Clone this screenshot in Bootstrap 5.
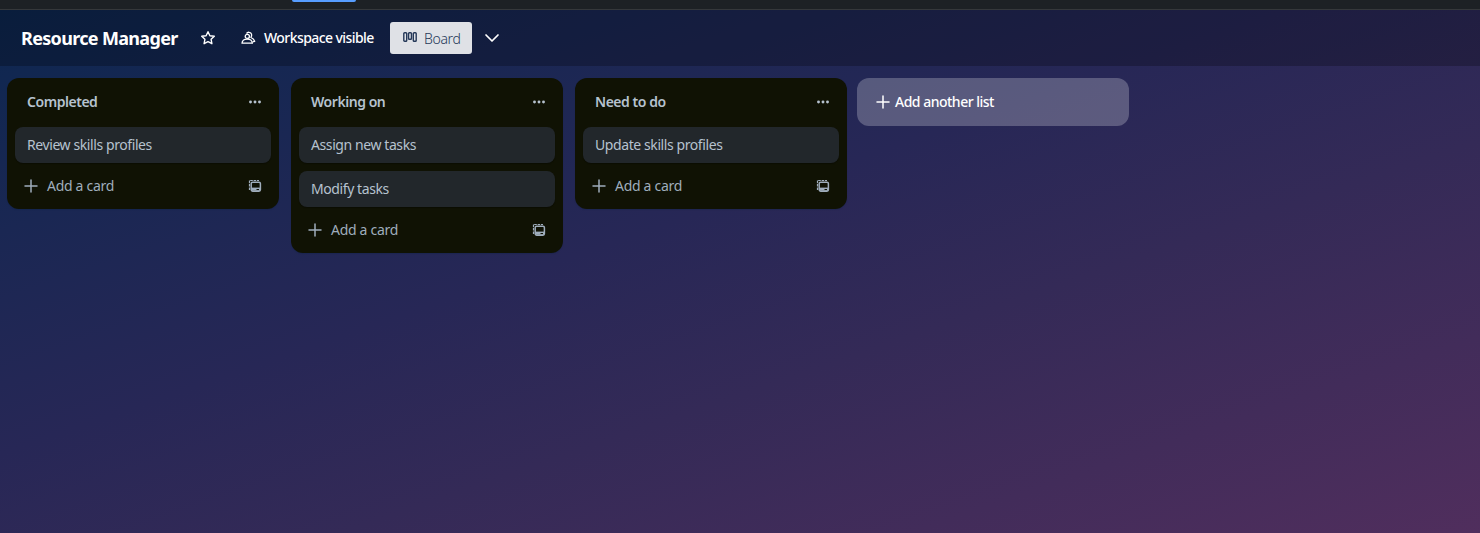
<!DOCTYPE html>
<html lang="en">
<head>
<meta charset="utf-8">
<meta name="viewport" content="width=device-width, initial-scale=1">
<title>Resource Manager</title>
<link rel="stylesheet" href="https://cdn.jsdelivr.net/npm/bootstrap@5.3.0/dist/css/bootstrap.min.css">
<style>
body{font-family:"Noto Sans","Open Sans",sans-serif;font-size:14px;line-height:20px;color:#b6c2cf;height:533px;background:#1d2125}
svg{display:block;flex:none}
.topnav{height:10px;background:#1d2125;border-bottom:1px solid #35383b}
.tab-mark{width:64px;height:2px;margin-left:292px;background:#579dff;border-radius:0 0 2px 2px}
.board{height:523px;background:linear-gradient(161deg,#0d2750 0%,#272756 43%,#342a57 62%,#502e5d 100%)}
.board-head{height:56px;background:rgba(0,0,0,.24);color:#fff;padding-left:21px}
.board-title{font-size:18px;line-height:24px;width:157px;letter-spacing:-.67px}
.star{margin-left:22px}
.people{margin-left:25px}
.visible-label{margin-left:8px;width:110px;letter-spacing:-.57px}
.board-btn{width:82px;height:32px;margin-left:16px;padding:0 0 0 13px;background:#dfe1e6;color:#253858;border-radius:3px}
.board-btn span{margin-left:7px;font-weight:300;letter-spacing:-.35px}
.chev{margin-left:12px}
.lists{padding:12px 0 0 7px}
.list-col{width:272px;margin-right:12px;background:#101204;border-radius:12px;padding:8px 8px 8.5px;box-shadow:0 1px 1px #091e4240}
.list-head{height:32px;padding:0 9px 0 12px;margin-bottom:9px}
.list-title{font-size:14px;font-weight:600;letter-spacing:-.46px;margin:0;line-height:20px}
.task{height:36px;background:#22272b;border-radius:8px;padding:8px 12px;margin-bottom:8px;box-shadow:0 1px 1px rgba(0,0,0,.3);letter-spacing:-.41px}
.list-foot{height:29px;padding:1px 9px 0;color:#9fadbc;letter-spacing:-.3px}
.list-foot span{margin-left:9px}
.add-list{width:272px;height:48px;margin-left:-2px;padding-left:19px;border-radius:12px;background:rgba(255,255,255,.24);color:#fff;letter-spacing:-.5px}
.add-list span{margin-left:5px}
</style>
<script src="https://cdn.jsdelivr.net/npm/bootstrap@5.3.0/dist/js/bootstrap.bundle.min.js"></script>
</head>
<body class="overflow-hidden">
<svg class="d-none" aria-hidden="true">
  <symbol id="plus" viewBox="0 0 14 14"><path d="M7 1v12M1 7h12" stroke="currentColor" stroke-width="1.5" stroke-linecap="round"/></symbol>
  <symbol id="dots" viewBox="0 0 14 4"><g fill="currentColor"><circle cx="2.5" cy="2" r="1.45"/><circle cx="7" cy="2" r="1.45"/><circle cx="11.5" cy="2" r="1.45"/></g></symbol>
  <symbol id="template" viewBox="0 0 14 14"><g fill="none" stroke="currentColor"><path d="M1.5 11V1.5h9.5" stroke-width="1.2" stroke-dasharray="2.6 .8"/><rect x="3.2" y="3.2" width="9.2" height="9" rx="1.4" stroke-width="1.5"/></g><path d="M3.4 8.6h8.8v3.2H3.4z" fill="currentColor"/><path d="M8.5 10.5h2.5" stroke="#101204"/></symbol>
</svg>
<div class="topnav"><div class="tab-mark"></div></div>
<main class="board">
  <header class="board-head d-flex align-items-center">
    <h1 class="board-title fw-bold mb-0 text-nowrap">Resource Manager</h1>
    <svg class="star" width="16" height="16" viewBox="0 0 16 16"><path d="M8 1.7l1.9 4 4.4.6-3.2 3 .8 4.4L8 11.6l-3.9 2.1.8-4.4-3.2-3 4.4-.6z" fill="none" stroke="#fff" stroke-width="1.4" stroke-linejoin="round"/></svg>
    <svg class="people" width="15" height="14" viewBox="0 0 15 14"><g fill="none" stroke="#fff" stroke-width="1.3" stroke-linejoin="round"><circle cx="6.3" cy="5.4" r="2.1"/><path d="M1 12.2c.2-2.7 1.8-4.1 5.2-4.1s5 1.4 5.2 4.1z"/><path d="M5.5 2.5c.8-1.1 1.8-1.4 2.8-1.2 2.4.3 3 2.9 1.6 5.2 2.1.8 3.3 1.9 3.8 3.9l-2 .4"/></g></svg>
    <span class="visible-label fw-medium text-nowrap">Workspace visible</span>
    <button class="board-btn btn border-0 d-flex align-items-center fs-6">
      <svg width="14" height="12" viewBox="0 0 14 12"><g fill="none" stroke="#253858" stroke-width="1.4"><rect x=".8" y=".8" width="2.9" height="8.4" rx=".8"/><rect x="5.55" y=".8" width="2.9" height="6.4" rx=".8"/><rect x="10.3" y=".8" width="2.9" height="8.4" rx=".8"/></g></svg>
      <span class="small">Board</span>
    </button>
    <svg class="chev" width="16" height="16" viewBox="0 0 16 16"><path d="M2 5l6 6 6-6" fill="none" stroke="#fff" stroke-width="1.7" stroke-linecap="round" stroke-linejoin="round"/></svg>
  </header>
  <div class="lists d-flex align-items-start">
    <section class="list-col">
      <div class="list-head d-flex align-items-center justify-content-between"><h2 class="list-title">Completed</h2><svg width="14" height="4"><use href="#dots"/></svg></div>
      <div class="task">Review skills profiles</div>
      <div class="list-foot d-flex align-items-center"><svg width="14" height="14"><use href="#plus"/></svg><span>Add a card</span><svg class="ms-auto" width="14" height="14"><use href="#template"/></svg></div>
    </section>
    <section class="list-col">
      <div class="list-head d-flex align-items-center justify-content-between"><h2 class="list-title">Working on</h2><svg width="14" height="4"><use href="#dots"/></svg></div>
      <div class="task">Assign new tasks</div>
      <div class="task">Modify tasks</div>
      <div class="list-foot d-flex align-items-center"><svg width="14" height="14"><use href="#plus"/></svg><span>Add a card</span><svg class="ms-auto" width="14" height="14"><use href="#template"/></svg></div>
    </section>
    <section class="list-col">
      <div class="list-head d-flex align-items-center justify-content-between"><h2 class="list-title">Need to do</h2><svg width="14" height="4"><use href="#dots"/></svg></div>
      <div class="task">Update skills profiles</div>
      <div class="list-foot d-flex align-items-center"><svg width="14" height="14"><use href="#plus"/></svg><span>Add a card</span><svg class="ms-auto" width="14" height="14"><use href="#template"/></svg></div>
    </section>
    <div class="add-list d-flex align-items-center"><svg width="14" height="14"><use href="#plus"/></svg><span class="fw-medium">Add another list</span></div>
  </div>
</main>
</body>
</html>
